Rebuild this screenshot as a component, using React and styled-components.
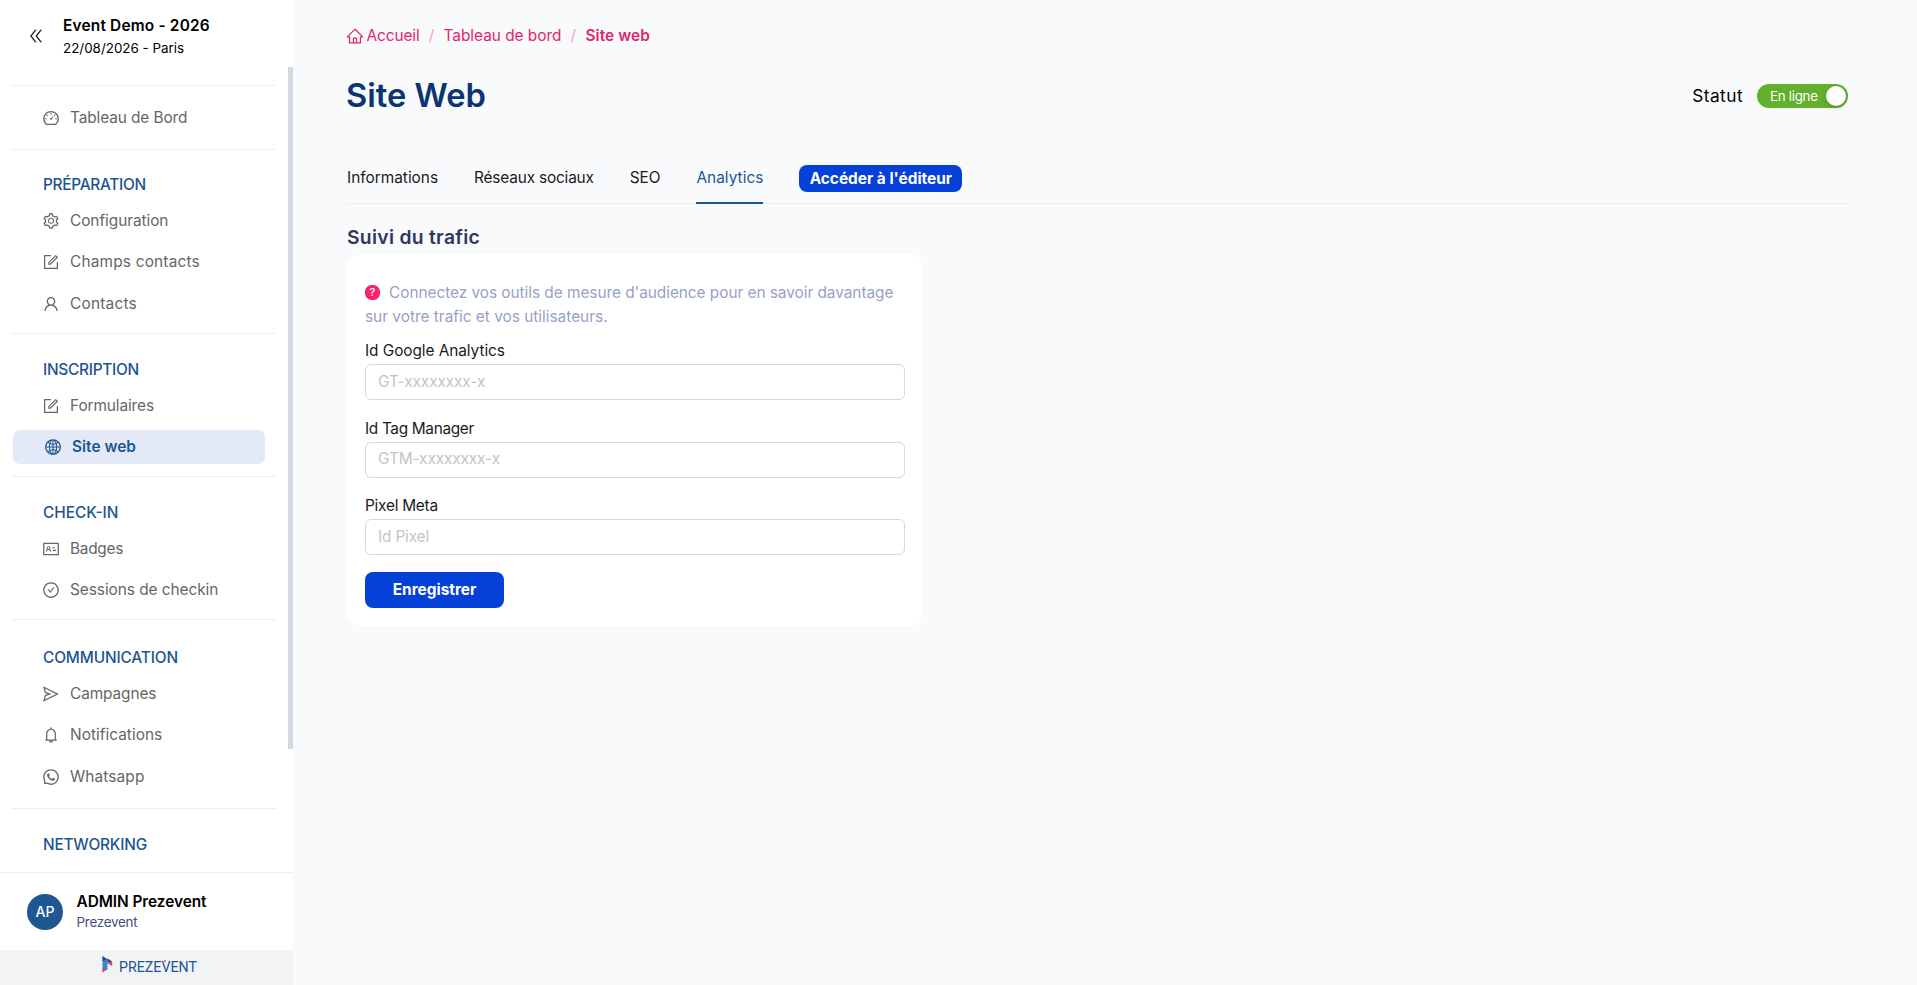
import React from "react";
import styled, { createGlobalStyle } from "styled-components";
import {
  AiOutlineDoubleLeft, AiOutlineDashboard, AiOutlineSetting, AiOutlineForm, AiOutlineUser,
  AiOutlineGlobal, AiOutlineIdcard, AiOutlineCheckCircle, AiOutlineSend, AiOutlineBell,
  AiOutlineWhatsApp, AiOutlineHome,
} from "react-icons/ai";

const GlobalStyle = createGlobalStyle`
  *, *::before, *::after { box-sizing: border-box; }
  body {
    margin: 0;
    background: #f9fafc;
    font-family: Inter, "Liberation Sans", sans-serif;
    font-size: 15.4px;
    font-weight: 400;
    color: #1b1b1d;
  }
`;

const Shell = styled.div`
  display: flex;
  height: 985px;
  overflow: hidden;
`;

/* letter-spaced text run */
const Text = styled.span`
  letter-spacing: ${(p) => p.$ls || 0}px;
  white-space: nowrap;
`;

/* Sidebar */
const Sidebar = styled.aside`
  width: 293px;
  flex: none;
  display: flex;
  flex-direction: column;
  background: #fff;
`;

const EventHeader = styled.header`
  height: 67px;
  flex: none;
  display: flex;
  gap: 18px;
  padding: 14px 0 0 27px;
`;

const Collapse = styled.button`
  display: flex;
  width: 18px;
  height: 18px;
  margin-top: 13px;
  padding: 0;
  border: 0;
  background: none;
  color: #222;
  font-size: 18px;
`;

const EventName = styled.div`
  font-weight: 600;
  line-height: 24px;
  color: #000;
`;

const EventMeta = styled.div`
  font-size: 13.4px;
  line-height: 21px;
  color: #000;
`;

const NavArea = styled.div`
  display: flex;
  height: 805px;
  flex: none;
  overflow: hidden;
`;

const Nav = styled.nav`
  flex: 1;
  padding: 18px 12px 0 11px;
`;

const ScrollTrack = styled.div`
  width: 5px;
`;

const ScrollThumb = styled.div`
  height: 682px;
  background: #d2d9e1;
`;

const Group = styled.section`
  height: ${(p) => p.$h}px;
  padding-top: ${(p) => p.$top}px;
  border-top: 1px solid #eeeff0;
`;

const GroupTitle = styled.h2`
  margin: 0 0 6px 32px;
  font-size: inherit;
  font-weight: 500;
  line-height: 24px;
  color: #1d5592;
`;

const NavItem = styled.a`
  display: flex;
  align-items: center;
  gap: 10px;
  width: 252px;
  height: 34px;
  margin: 0 0 7.8px 2px;
  padding-left: ${(p) => (p.$active ? 31 : 29)}px;
  border-radius: 7px;
  background: ${(p) => (p.$active ? "#e3e9f7" : "transparent")};
  color: ${(p) => (p.$active ? "#1d5592" : "#666668")};
  font-weight: ${(p) => (p.$active ? 600 : 400)};
  svg { font-size: 18px; margin-top: ${(p) => (p.$active ? 0 : 1)}px; }
`;

const Account = styled.div`
  height: 78px;
  flex: none;
  display: flex;
  align-items: center;
  gap: 13.5px;
  padding-left: 27px;
  border-top: 1px solid #eeeff0;
`;

const Avatar = styled.div`
  display: grid;
  place-items: center;
  width: 36px;
  height: 36px;
  border-radius: 50%;
  background: #1f5792;
  color: #fff;
  font-size: 14px;
  font-weight: 500;
`;

const AccountName = styled.div`
  font-weight: 600;
  line-height: 22px;
  color: #000;
`;

const AccountOrg = styled.div`
  font-size: 13.4px;
  line-height: 19px;
  color: #474f7d;
`;

const Brand = styled.footer`
  flex: 1;
  display: flex;
  justify-content: center;
  padding: 5px 0 0 15px;
  background: #f2f3f5;
`;

/* Main */
const Main = styled.main`
  flex: 1;
  padding: 24px 69px 0 54px;
`;

const Breadcrumb = styled.nav`
  display: flex;
  align-items: center;
  height: 23px;
  color: #e0266b;
  svg { font-size: 18px; margin: 0 2.5px 0 -1px; }
`;

const Slash = styled.span`
  width: 24px;
  text-align: center;
  color: #f2a3bf;
`;

const Current = styled.span`
  font-weight: 600;
`;

const TitleRow = styled.div`
  display: flex;
  align-items: center;
  justify-content: space-between;
  height: 44px;
  margin-top: 27px;
`;

const Title = styled.h1`
  margin: 0 0 0 -1px;
  line-height: 44px;
  padding-bottom: 3px;
  font-size: 32.7px;
  font-weight: 600;
  color: #0b3572;
`;

const Status = styled.div`
  display: flex;
  align-items: center;
  gap: 14px;
  color: #000;
  font-size: 17.3px;
  > span { padding-bottom: 1px; }
`;

const Switch = styled.button`
  display: flex;
  align-items: center;
  justify-content: space-between;
  width: 91px;
  height: 24px;
  padding: 0 2px 0 13px;
  border: 0;
  border-radius: 12px;
  background: #62b02c;
  color: #fff;
  font: 400 13.4px Inter, sans-serif;
  span { padding-bottom: 1px; }
`;

const Knob = styled.i`
  width: 20px;
  height: 20px;
  border-radius: 50%;
  background: #fff;
  box-shadow: 0 2px 4px rgba(0, 35, 11, 0.2);
`;

const Tabs = styled.div`
  display: flex;
  align-items: flex-start;
  gap: 36px;
  height: 51px;
  margin-top: 35px;
  border-bottom: 1px solid #eeeff1;
`;

const Tab = styled.a`
  height: 51px;
  line-height: 49px;
  color: ${(p) => (p.$active ? "#1d5592" : "#1b1b1d")};
  border-bottom: 2px solid ${(p) => (p.$active ? "#1d5592" : "transparent")};
`;

const PrimaryButton = styled.button`
  display: flex;
  align-items: center;
  justify-content: center;
  width: ${(p) => p.$w}px;
  height: ${(p) => p.$h}px;
  margin: ${(p) => p.$mt}px 0 0;
  padding: 0 0 1px;
  border: 0;
  border-radius: 8px;
  background: #0540d9;
  color: #fff;
  font: 700 15.4px Inter, sans-serif;
`;

const SectionTitle = styled.h3`
  margin: 18px 0 0;
  font-size: 19.3px;
  font-weight: 600;
  line-height: 30px;
  color: #2e3761;
`;

const Card = styled.form`
  width: 576px;
  height: 372px;
  margin-top: 2px;
  padding: 27px 18px 0;
  border-radius: 14px;
  background: #fff;
`;

const Tip = styled.p`
  margin: 0;
  line-height: 24px;
  color: #979fca;
`;

const TipBadge = styled.span`
  display: inline-block;
  width: 15px;
  height: 15px;
  margin-right: 9px;
  border-radius: 6.5px;
  background: #ff1f6c;
  color: #fff;
  font-size: 11px;
  font-weight: 500;
  line-height: 15px;
  text-align: center;
  vertical-align: 2px;
`;

const Field = styled.label`
  display: block;
  height: 77.6px;
  padding-top: 9px;
  line-height: 25px;
`;

const Input = styled.input`
  display: block;
  width: 540px;
  height: 36px;
  margin-top: 1px;
  padding: 0 12px 2px;
  border: 1px solid #d8d8d9;
  border-radius: 6px;
  background: #fff;
  font: 400 15.4px Inter, sans-serif;
  letter-spacing: ${(p) => p.$ls}px;
  &::placeholder { color: #c4c4c4; opacity: 1; }
`;

const groups = [
  { h: 64, top: 14, items: [["Tableau de Bord", AiOutlineDashboard, -0.1]] },
  {
    title: "PRÉPARATION", ls: -0.28, h: 184, top: 23,
    items: [["Configuration", AiOutlineSetting, -0.05], ["Champs contacts", AiOutlineForm, 0.19], ["Contacts", AiOutlineUser, 0.23]],
  },
  {
    title: "INSCRIPTION", ls: -0.26, h: 143, top: 24,
    items: [["Formulaires", AiOutlineForm, -0.1], ["Site web", AiOutlineGlobal, 0.03, true]],
  },
  {
    title: "CHECK-IN", ls: 0, h: 143, top: 24,
    items: [["Badges", AiOutlineIdcard, -0.28], ["Sessions de checkin", AiOutlineCheckCircle, -0.05]],
  },
  {
    title: "COMMUNICATION", ls: -0.13, h: 189, top: 26,
    items: [["Campagnes", AiOutlineSend, -0.1], ["Notifications", AiOutlineBell, 0.03], ["Whatsapp", AiOutlineWhatsApp, 0.13]],
  },
  { title: "NETWORKING", ls: -0.2, h: 64, top: 24, items: [] },
];

const fields = [
  ["Id Google Analytics", "GT-xxxxxxxx-x", -0.06, -0.1],
  ["Id Tag Manager", "GTM-xxxxxxxx-x", -0.33, -0.12],
  ["Pixel Meta", "Id Pixel", -0.24, -0.15],
];

const BrandLogo = () => (
  <svg width="104" height="24" viewBox="0 0 104 24">
    <path d="M0.5 1.5 L5.5 4.5 V14.5 L0.5 17 Z" fill="#3b86cc" />
    <path d="M0.5 1 L5.5 4.4 L0.5 6 Z" fill="#1b4d8a" />
    <path d="M5.5 3.2 L10.2 6.4 L5.5 8 Z" fill="#1b4d8a" />
    <path d="M10.2 6.4 V11 L5.5 8.2 Z" fill="#f0307a" />
    <path d="M0.5 17.2 V13.4 L4.4 14.8 Z" fill="#f0307a" />
    <text x="17" y="16.6" fontFamily="Roboto, sans-serif" fontSize="15.5" fontWeight="400" fill="#1d5592" textLength="78" lengthAdjust="spacingAndGlyphs">PREZEVENT</text>
    <circle cx="63" cy="6" r="0.9" fill="#f0307a" />
  </svg>
);

export default function App() {
  return (
    <>
      <GlobalStyle />
      <Shell>
        <Sidebar>
          <EventHeader>
            <Collapse aria-label="Réduire"><AiOutlineDoubleLeft /></Collapse>
            <div>
              <EventName><Text $ls={0.2}>Event Demo - 2026</Text></EventName>
              <EventMeta><Text>22/08/2026 - Paris</Text></EventMeta>
            </div>
          </EventHeader>
          <NavArea>
            <Nav>
              {groups.map((g, i) => (
                <Group key={i} $h={g.h} $top={g.top}>
                  {g.title && <GroupTitle><Text $ls={g.ls}>{g.title}</Text></GroupTitle>}
                  {g.items.map(([label, Icon, ls, active]) => (
                    <NavItem key={label} $active={active}>
                      <Icon />
                      <Text $ls={ls}>{label}</Text>
                    </NavItem>
                  ))}
                </Group>
              ))}
            </Nav>
            <ScrollTrack><ScrollThumb /></ScrollTrack>
          </NavArea>
          <Account>
            <Avatar>AP</Avatar>
            <div>
              <AccountName><Text $ls={-0.06}>ADMIN Prezevent</Text></AccountName>
              <AccountOrg><Text $ls={-0.24}>Prezevent</Text></AccountOrg>
            </div>
          </Account>
          <Brand><BrandLogo /></Brand>
        </Sidebar>
        <Main>
          <Breadcrumb>
            <AiOutlineHome />
            <Text $ls={-0.1}>Accueil</Text>
            <Slash>/</Slash>
            <Text $ls={-0.02}>Tableau de bord</Text>
            <Slash>/</Slash>
            <Current><Text $ls={0.1}>Site web</Text></Current>
          </Breadcrumb>
          <TitleRow>
            <Title><Text $ls={0}>Site Web</Text></Title>
            <Status>
              <Text $ls={0.47}>Statut</Text>
              <Switch><Text $ls={-0.3}>En ligne</Text><Knob /></Switch>
            </Status>
          </TitleRow>
          <Tabs>
            <Tab><Text>Informations</Text></Tab>
            <Tab><Text $ls={-0.18}>Réseaux sociaux</Text></Tab>
            <Tab><Text $ls={-0.1}>SEO</Text></Tab>
            <Tab $active><Text $ls={0.03}>Analytics</Text></Tab>
            <PrimaryButton $w={163} $h={27} $mt={12}>Accéder à l'éditeur</PrimaryButton>
          </Tabs>
          <SectionTitle><Text $ls={0.3}>Suivi du trafic</Text></SectionTitle>
          <Card>
            <Tip>
              <TipBadge>?</TipBadge>
              <Text $ls={-0.04}>Connectez vos outils de mesure d'audience pour en savoir davantage</Text>
              <br />
              <Text>sur votre trafic et vos utilisateurs.</Text>
            </Tip>
            {fields.map(([label, placeholder, ls, pls]) => (
              <Field key={label}>
                <Text $ls={ls}>{label}</Text>
                <Input placeholder={placeholder} $ls={pls} />
              </Field>
            ))}
            <PrimaryButton type="button" $w={139} $h={36} $mt={10}>Enregistrer</PrimaryButton>
          </Card>
        </Main>
      </Shell>
    </>
  );
}
